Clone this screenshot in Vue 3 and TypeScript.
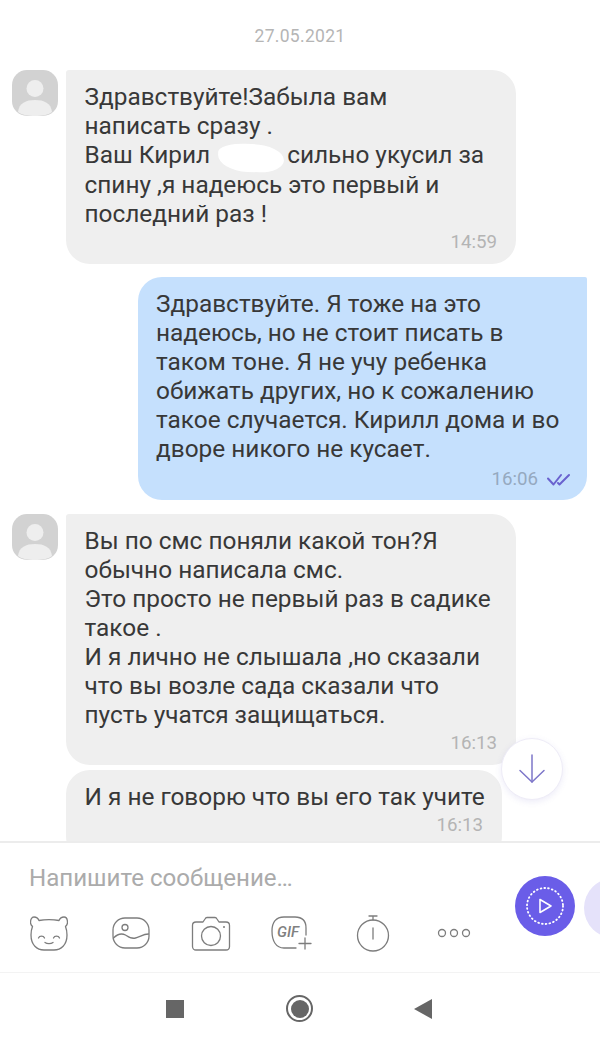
<script setup lang="ts">
const msgs3: string[] = ['Вы по смс поняли какой тон?Я', 'обычно написала смс.', 'Это просто не первый раз в садике', 'такое .', 'И я лично не слышала ,но сказали', 'что вы возле сада сказали что', 'пусть учатся защищаться.']
const msgs2: string[] = ['Здравствуйте. Я тоже на это', 'надеюсь, но не стоит писать в', 'таком тоне. Я не учу ребенка', 'обижать других, но к сожалению', 'такое случается. Кирилл дома и во', 'дворе никого не кусает.']
</script>

<template>
  <div class="screen">
    <main class="chat">
      <div class="date">27.05.2021</div>

      <div class="row">
        <svg class="avatar" viewBox="0 0 46 46">
          <rect width="46" height="46" rx="15" fill="#d2d2d2" />
          <circle cx="23" cy="18.500" r="8.500" fill="#eeeeee" />
          <path d="M6 42c1-9 8-12 17-12s16 3 17 12c-4 3-10 4-17 4s-13-1-17-4z" fill="#eeeeee" />
        </svg>
        <div class="bubble in b1">
          <p>Здравствуйте!Забыла вам</p>
          <p>написать сразу .</p>
          <p>Ваш Кирил <span class="blob"></span>сильно укусил за</p>
          <p>спину ,я надеюсь это первый и</p>
          <p>последний раз !</p>
          <div class="meta">14:59</div>
        </div>
      </div>

      <div class="row out-row">
        <div class="bubble out">
          <p v-for="l in msgs2" :key="l">{{ l }}</p>
          <div class="meta out-meta">
            <span>16:06</span>
            <svg class="ticks" width="23" height="13" viewBox="0 0 23 13" fill="none" stroke="#6a62cf" stroke-width="2" stroke-linecap="round" stroke-linejoin="round">
              <path d="M1 5.500l5.500 6L14 2" />
              <path d="M11 10l1.500 1.500L22 2" />
            </svg>
          </div>
        </div>
      </div>

      <div class="row">
        <svg class="avatar" viewBox="0 0 46 46">
          <rect width="46" height="46" rx="15" fill="#d2d2d2" />
          <circle cx="23" cy="18.500" r="8.500" fill="#eeeeee" />
          <path d="M6 42c1-9 8-12 17-12s16 3 17 12c-4 3-10 4-17 4s-13-1-17-4z" fill="#eeeeee" />
        </svg>
        <div class="bubble in b3">
          <p v-for="l in msgs3" :key="l">{{ l }}</p>
          <div class="meta">16:13</div>
        </div>
      </div>

      <div class="row follow">
        <div class="bubble in b4">
          <p>И я не говорю что вы его так учите</p>
          <div class="meta">16:13</div>
        </div>
      </div>

      <button class="scroll-down" aria-label="Вниз">
        <svg width="28" height="32" viewBox="0 0 28 32" fill="none" stroke="#7d76c9" stroke-width="1.500" stroke-linecap="round" stroke-linejoin="round">
          <path d="M14 2v27" />
          <path d="M2 17.500L14 29l12-11.500" />
        </svg>
      </button>
    </main>

    <section class="composer">
      <div class="placeholder">Напишите сообщение…</div>
      <div class="tools">
        <svg class="ic" width="38" height="35" viewBox="0 0 38 35" fill="none" stroke="#7d7d7d" stroke-width="1.300" stroke-linecap="round" stroke-linejoin="round">
          <path d="M9 4.500C14 3.500 24 3.500 29 4.500 30 2 32 1 34 1c2.500 0 3.500 3 3.500 5.500 0 2-1 3-2 4 1 2.500 1.500 5.500 1.500 8.500 0 10-6 15-13 15H14C7 34 1 29 1 19c0-3 .5-6 1.500-8.500-1-1-2-2-2-4C.5 4 1.500 1 4 1c2 0 4 1 5 3.500z" />
          <path d="M8.500 22c1-2.500 5-2.500 6 0M23.500 22c1-2.500 5-2.500 6 0M15 26.500c2 1.500 6 1.500 8 0" />
        </svg>
        <svg class="ic image" width="38" height="32" viewBox="0 0 38 32" fill="none" stroke="#7d7d7d" stroke-width="1.300" stroke-linecap="round" stroke-linejoin="round">
          <rect x="1" y="1" width="36" height="30" rx="12" />
          <circle cx="13" cy="10.500" r="3" />
          <path d="M1.500 21c4-4 8-5 12-3 4 2.500 6 4 10 3 4-1 8-4 13-4" />
        </svg>
        <svg class="ic camera" width="40" height="35" viewBox="0 0 40 35" fill="none" stroke="#7d7d7d" stroke-width="1.300" stroke-linecap="round" stroke-linejoin="round">
          <path d="M5 6h7l2-3c.5-1 1-1.500 2-1.500h8c1 0 1.500.5 2 1.500l2 3h7c2 0 3.500 1.500 3.500 3.500v21c0 2-1.500 3.500-3.500 3.500H5c-2 0-3.500-1.500-3.500-3.500v-21C1.500 7.500 3 6 5 6z" />
          <circle cx="20" cy="20" r="9.500" />
          <circle cx="33" cy="11" r="1" fill="#7d7d7d" stroke="none" />
        </svg>
        <div class="gif-wrap">
          <svg width="42" height="34" viewBox="0 0 42 34" fill="none" stroke="#7d7d7d" stroke-width="1.300" stroke-linecap="round" stroke-linejoin="round">
            <path d="M35 19V12C35 5 31 1 24 1H13C5 1 1 6 1 15c0 10 4 17 12 17h12" />
            <path d="M34 22v11M28 27.500h12" />
          </svg>
          <span class="gif">GIF</span>
        </div>
        <svg class="ic timer" width="34" height="37" viewBox="0 0 34 37" fill="none" stroke="#7d7d7d" stroke-width="1.300" stroke-linecap="round">
          <circle cx="17" cy="20.500" r="15.500" />
          <path d="M17 5V1M13 1h8M17 13v11" />
        </svg>
        <svg class="ic dots" width="34" height="10" viewBox="0 0 34 10" fill="none" stroke="#7d7d7d" stroke-width="1.300">
          <circle cx="5" cy="5" r="3.500" />
          <circle cx="17" cy="5" r="3.500" />
          <circle cx="29" cy="5" r="3.500" />
        </svg>
      </div>
      <button class="ptt" aria-label="Видео">
        <svg width="40" height="40" viewBox="0 0 40 40" fill="none" stroke="#fff" stroke-linejoin="round">
          <circle cx="20" cy="20" r="18" stroke-width="1.800" stroke-dasharray="0.800 3" stroke-linecap="round" />
          <path d="M15 13.500v13L26 20z" stroke-width="1.600" />
        </svg>
      </button>
      <div class="ptt-next"></div>
    </section>

    <nav class="navbar">
      <span class="nav-square"></span>
      <span class="nav-home"><span></span></span>
      <span class="nav-back"></span>
    </nav>
  </div>
</template>

<style>
html, body { margin: 0; padding: 0; background: #fff; }
</style>

<style scoped>
.screen {
  width: 600px;
  height: 1044px;
  display: flex;
  flex-direction: column;
  overflow: hidden;
  position: relative;
  background: #fff;
  font-family: Roboto, "Liberation Sans", sans-serif;
  color: #333;
}
.chat {
  height: 841px;
  flex: none;
  overflow: hidden;
  position: relative;
  box-sizing: border-box;
}
.date {
  height: 70px;
  padding-top: 26px;
  box-sizing: border-box;
  text-align: center;
  font-size: 17.500px;
  line-height: 20px;
  color: #b5b5b5;
  letter-spacing: 0.300px;
}
.row { display: flex; gap: 8px; padding-left: 12px; margin-bottom: 13px; }
.avatar { width: 46px; height: 46px; flex: none; }
.out-row { justify-content: flex-end; padding-right: 13px; margin-bottom: 14px; }
.follow { padding-left: 66px; margin-top: -8px; }
.bubble {
  box-sizing: border-box;
  padding: 12px 19px 10px 18.500px;
  font-size: 24.400px;
  line-height: 29px;
  color: #383838;
}
.bubble p { margin: 0; white-space: nowrap; }
.in { background: #efefef; border-radius: 3px 24px 24px 24px; width: 450px; }
.out { background: #c5e0fd; border-radius: 24px 2px 24px 24px; width: 449px; height: 223px; padding-left: 18px; padding-right: 17px; }
.b1 { height: 194px; }
.b3 { height: 251px; }
.b4 { width: 436px; height: 90px; border-radius: 24px; }
.meta {
  display: flex;
  justify-content: flex-end;
  align-items: center;
  gap: 9px;
  font-size: 18.700px;
  line-height: 22px;
  color: #b4b4b4;
  margin-top: 3px;
}
.out-meta { color: #95a9c0; margin-top: 5px; }
.ticks { flex: none; }
.blob {
  display: inline-block;
  position: relative;
  vertical-align: -7px;
  width: 66px;
  height: 28px;
  margin: -2px 3px -2px 2px;
  border-radius: 45% 55% 40% 50% / 35% 60% 50% 65%;
  background: #fff;
  transform: rotate(2deg);
}
.scroll-down {
  position: absolute;
  left: 501px;
  top: 738px;
  width: 62px;
  height: 62px;
  border-radius: 50%;
  border: 1px solid #eeecf7;
  background: #fff;
  box-shadow: 0 2px 6px rgba(110, 100, 200, 0.12);
  padding: 0;
  display: flex;
  align-items: center;
  justify-content: center;
}
.composer {
  flex: none;
  height: 132px;
  box-sizing: border-box;
  border-top: 2px solid #ececec;
  border-bottom: 1px solid #f3f3f3;
  position: relative;
  padding: 21px 0 0 29px;
}
.placeholder {
  font-size: 24.100px;
  line-height: 28px;
  color: #ababab;
}
.tools {
  display: flex;
  align-items: center;
  margin-top: 21px;
  margin-left: 1px;
  gap: 42px;
  height: 40px;
}
.image { margin-left: 2px; }
.camera { margin-left: -1px; }
.gif-wrap { position: relative; width: 42px; height: 34px; margin-left: -2px; }
.gif-wrap svg { display: block; }
.gif {
  position: absolute;
  left: 6px;
  top: 7px;
  font-size: 15px;
  line-height: 18px;
  font-weight: 500;
  font-style: italic;
  color: #808080;
}
.timer { margin-left: 1px; }
.dots { margin-left: 4.500px; }
.ptt {
  position: absolute;
  left: 515px;
  top: 33px;
  width: 60px;
  height: 60px;
  border: 0;
  border-radius: 50%;
  padding: 0;
  background: #6a5de8;
  display: flex;
  align-items: center;
  justify-content: center;
}
.ptt-next {
  position: absolute;
  left: 584px;
  top: 35px;
  width: 60px;
  height: 60px;
  border-radius: 50%;
  background: #e5e2fa;
}
.navbar {
  flex: 1;
  display: flex;
  align-items: center;
  padding-left: 166px;
}
.nav-square { width: 18px; height: 18px; background: #666; }
.nav-home {
  margin-left: 102px;
  width: 27px;
  height: 27px;
  box-sizing: border-box;
  border: 2px solid #666;
  border-radius: 50%;
  display: flex;
  align-items: center;
  justify-content: center;
}
.nav-home span { width: 18px; height: 18px; border-radius: 50%; background: #666; }
.nav-back {
  margin-left: 101px;
  width: 0;
  height: 0;
  border-top: 10px solid transparent;
  border-bottom: 10px solid transparent;
  border-right: 18px solid #666;
}
</style>
